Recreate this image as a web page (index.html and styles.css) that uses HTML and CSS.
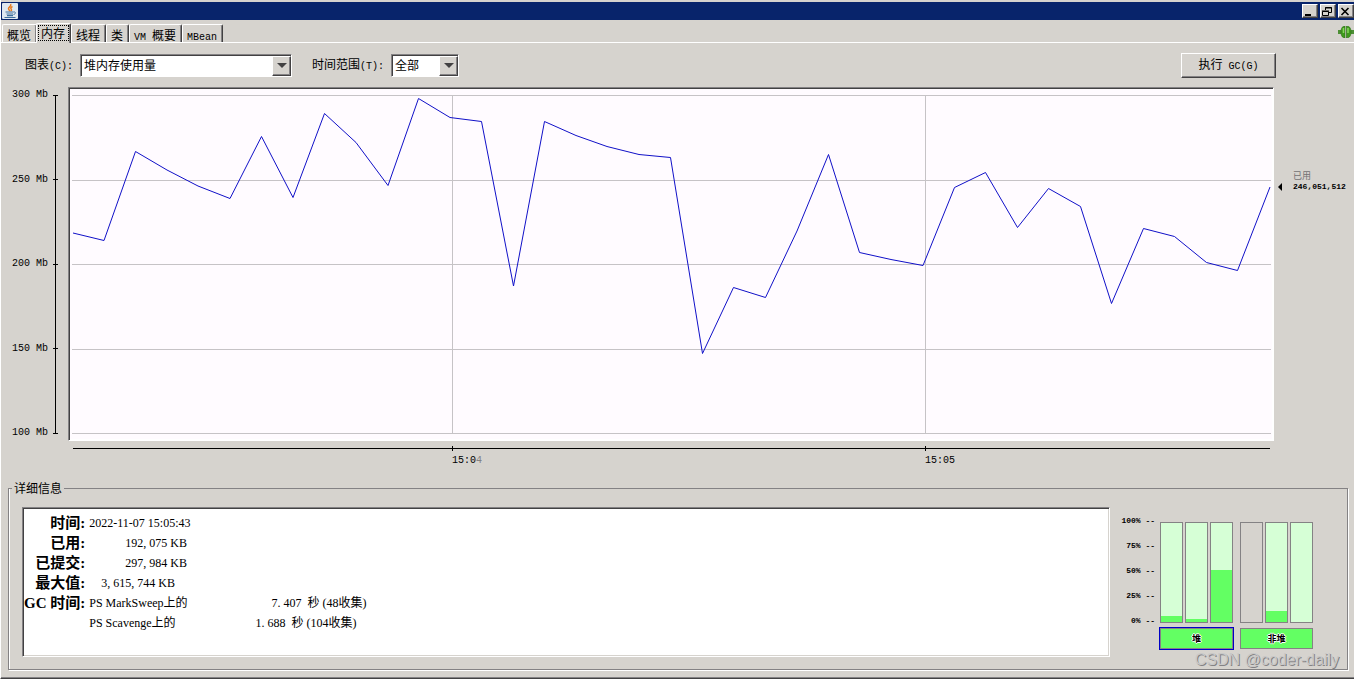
FILE: index.html
```html
<!DOCTYPE html>
<html lang="zh-CN">
<head>
<meta charset="utf-8">
<title>内存</title>
<link rel="stylesheet" href="styles.css">
</head>
<body>
<div class="window">
  <header class="titlebar">
    <svg class="java-icon" viewBox="0 0 16 16" aria-hidden="true">
      <rect width="16" height="16" rx="1" fill="#dfe8f0"/>
      <path d="M8.600 1C10 3 6.500 4 6.500 5.500S8 7 7.500 8.300M10.500 3.500C8.500 4.500 8.500 5.500 9.300 6.300S9 8 9 8.300" fill="none" stroke="#e87a1c" stroke-width="1.500"/>
      <path d="M3.500 9h8M4.500 11h6.500M5 12.700h6M2.500 14.500h11" fill="none" stroke="#3f6f9c" stroke-width="1.200"/>
      <path d="M11.500 9c2.500-.6 2.500 2 0 2.600" fill="none" stroke="#3f6f9c"/>
    </svg>
    <div class="window-buttons">
      <button class="win-btn" aria-label="最小化"><svg viewBox="0 0 12 11"><path d="M2 9h6" stroke="#000" stroke-width="2"/></svg></button>
      <button class="win-btn" aria-label="还原"><svg viewBox="0 0 12 11"><path d="M4.500 4V1.500h6v5H8M4 2h7M1.500 5.500h6v4h-6zM1 5h7" fill="none" stroke="#000"/></svg></button>
      <button class="win-btn" aria-label="关闭"><svg viewBox="0 0 12 11"><path d="M2.500 2l7 7M9.500 2l-7 7" stroke="#000" stroke-width="1.600"/></svg></button>
    </div>
  </header>

  <nav class="tabs" role="tablist">
    <button class="tab" role="tab">概览</button>
    <button class="tab selected" role="tab" aria-selected="true">内存</button>
    <button class="tab" role="tab">线程</button>
    <button class="tab" role="tab">类</button>
    <button class="tab" role="tab"><span class="mono">VM </span>概要</button>
    <button class="tab" role="tab"><span class="mono">MBean</span></button>
    <svg class="connected" viewBox="0 0 16 12" aria-label="已连接">
      <path d="M0 4h3v4H0zM13 4h3v4h-3z" fill="#4d8f35"/>
      <path d="M7 0v12C4 12 3 9 3 6s1-6 4-6z" fill="#3f9a1c" stroke="#27680f" stroke-width=".6"/>
      <path d="M8.500 0v12c3.500 0 4.500-3 4.500-6S12 0 8.500 0z" fill="#3f9a1c" stroke="#27680f" stroke-width=".6"/>
      <path d="M5.500 2v5M10 2v5" stroke="#86d85c" stroke-width="1.500"/>
    </svg>
  </nav>

  <main class="content">
    <div class="toolbar">
      <label for="chart">图表<span class="mono">(C):</span></label>
      <span class="combo combo-chart"><select id="chart"><option>堆内存使用量</option></select><span class="arrow"></span></span>
      <label class="range-label" for="range">时间范围<span class="mono">(T):</span></label>
      <span class="combo combo-range"><select id="range"><option>全部</option></select><span class="arrow"></span></span>
      <button class="gc-btn">执行<span class="mono"> GC(G)</span></button>
    </div>

    <section class="chart">
      <div class="y-axis mono">
        <span>300 Mb</span><span>250 Mb</span><span>200 Mb</span><span>150 Mb</span><span>100 Mb</span>
      </div>
      <div class="plot">
        <svg viewBox="69 88 1204 352" preserveAspectRatio="none" role="img" aria-label="堆内存使用量">
          <path class="grid-line" d="M72 95.500H1271M72 180.500H1271M72 264.500H1271M72 349.500H1271M72 433.500H1271M452.500 96V433M925.500 96V433"/>
          <polyline class="series" points="73,233 104,240.500 135.500,151.500 167,170 198,186 230,198.500 261.500,136.500 293,197.500 324.500,113.500 356,142.500 388,185.500 418.500,98.500 450,117.500 481.500,121.500 513.500,286 544.500,121.500 576,135.500 607,146.500 639,154.500 670.500,157.500 702.500,353.500 733.500,287.500 765.500,297.500 797,231 828.500,154.500 859.500,252.500 891,259.500 923,265.500 954.500,187.500 985.500,172.500 1017.500,227.500 1048.500,188.500 1080.500,206.500 1111.500,303.500 1143.500,228.500 1174.500,236.500 1206.500,262.500 1237.500,270.500 1270,187"/>
        </svg>
      </div>
      <div class="marker">
        <span class="pointer"></span>
        <p><span class="used">已用</span><b class="mono">246,051,512</b></p>
      </div>
      <div class="x-axis mono">
        <span class="tick tick-first">15:0<span class="faded">4</span></span><span class="tick tick-second">15:05</span>
      </div>
    </section>

    <fieldset class="details">
      <legend>详细信息</legend>
      <div class="info">
        <table>
          <tr><th scope="row">时间:</th><td>2022-11-07 15:05:43</td></tr>
          <tr><th scope="row">已用:</th><td class="indent-large">192, 075 KB</td></tr>
          <tr><th scope="row">已提交:</th><td class="indent-large">297, 984 KB</td></tr>
          <tr><th scope="row">最大值:</th><td class="indent-small">3, 615, 744 KB</td></tr>
          <tr><th scope="row">GC 时间:</th><td>PS MarkSweep上的<span class="gc-time">7. 407&nbsp; 秒 (48收集)</span></td></tr>
          <tr><th></th><td>PS Scavenge上的<span class="gc-time gc-time-minor">1. 688&nbsp; 秒 (104收集)</span></td></tr>
        </table>
      </div>
      <div class="pools">
        <div class="scale mono"><span>100% --</span><span>75% --</span><span>50% --</span><span>25% --</span><span>0% --</span></div>
        <div class="pool-group heap">
          <div class="bars">
            <div class="bar"><i style="height:6%"></i></div>
            <div class="bar"><i style="height:3%"></i></div>
            <div class="bar"><i style="height:53%"></i></div>
          </div>
          <button class="pool-btn active">堆</button>
        </div>
        <div class="pool-group">
          <div class="bars">
            <div class="bar empty"></div>
            <div class="bar"><i style="height:11%"></i></div>
            <div class="bar"></div>
          </div>
          <button class="pool-btn">非堆</button>
        </div>
      </div>
    </fieldset>
  </main>
  <div class="watermark">CSDN @coder-daily</div>
</div>
</body>
</html>
```
FILE: styles.css
```css
* { box-sizing: border-box; }

body {
  margin: 0;
  background: #d6d3ce;
  color: #000;
  font: 12px/16px "Liberation Serif", "Noto Sans CJK SC", serif;
}

button, select {
  font: inherit;
  color: inherit;
  border-radius: 0;
}

.mono {
  font-family: "Liberation Mono", monospace;
  font-size: 10px;
  white-space: pre;
}

.window {
  position: relative;
  display: flex;
  flex-direction: column;
  min-height: 100vh;
  padding-top: 2px;
  border-left: 1px solid #fff;
  border-bottom: 1px solid #424142;
  box-shadow: inset 0 -1px #848284;
}

.titlebar {
  display: flex;
  align-items: center;
  justify-content: space-between;
  height: 18px;
  padding-left: 1px;
  background: #08246b;
}

.java-icon { width: 16px; height: 16px; }

.window-buttons { display: flex; gap: 2px; }

.win-btn {
  width: 16px;
  height: 14px;
  padding: 0;
  border: 1px solid;
  border-color: #fff #424142 #424142 #fff;
  background: #d6d3ce;
  box-shadow: inset -1px -1px #848284;
}

.win-btn svg { display: block; width: 12px; height: 11px; }

.tabs {
  display: flex;
  align-items: flex-end;
  height: 23px;
  padding-left: 1px;
  border-bottom: 1px solid #fff;
}

.tab {
  height: 18px;
  padding: 0 5px 0 4px;
  border: 1px solid;
  border-color: #fff #424142 transparent #fff;
  border-bottom: 0;
  border-radius: 2px 2px 0 0;
  background: #d6d3ce;
  line-height: 22px;
  box-shadow: inset -1px 0 #848284;
}

.tab.selected {
  height: 20px;
  margin-left: -1px;
  margin-bottom: -1px;
  line-height: 20px;
  outline: 1px dotted #000;
  outline-offset: -3px;
}

.connected { width: 16px; height: 12px; margin: 0 0 4px auto; }

.content {
  display: flex;
  flex: 1;
  flex-direction: column;
  padding: 10px 6px 8px 7px;
}

.toolbar { display: flex; align-items: center; height: 24px; padding-left: 17px; }

.toolbar label { margin-right: 7px; line-height: 18px; padding-top: 2px; }
.toolbar .range-label { margin-left: 20px; margin-right: 7px; }

.combo {
  position: relative;
  height: 23px;
  border: 1px solid;
  border-color: #848284 #fff #fff #848284;
  box-shadow: inset 1px 1px #424142;
  background: #fff;
}

.combo-chart { width: 212px; }
.combo-range { width: 68px; }

.combo select {
  width: 100%;
  height: 21px;
  padding: 2px 20px 0 3px;
  border: 0;
  appearance: none;
  background: transparent;
}

.arrow {
  position: absolute;
  top: 1px;
  right: 0;
  display: grid;
  place-items: center;
  width: 19px;
  height: 20px;
  border: 1px solid;
  border-color: #fff #424142 #424142 #fff;
  box-shadow: inset -1px -1px #848284;
  background: #d6d3ce;
  pointer-events: none;
}

.arrow::before {
  content: "";
  border: 5px solid transparent;
  border-top-color: #424142;
  border-bottom: 0;
}

.gc-btn {
  width: 95px;
  height: 25px;
  margin-left: auto;
  margin-right: 72px;
  padding: 2px 0 0;
  border: 1px solid;
  border-color: #fff #424142 #424142 #fff;
  box-shadow: inset -1px -1px #848284;
  background: #d6d3ce;
}

.chart {
  display: grid;
  flex: 1;
  grid-template-columns: 60px 1fr 74px;
  grid-template-rows: 1fr auto;
  margin-top: 10px;
}

.y-axis {
  position: relative;
  display: flex;
  flex-direction: column;
  justify-content: space-between;
  padding: 2px 10px 2px 4px;
  line-height: 12px;
}

.y-axis span { display: flex; justify-content: space-between; align-items: center; }
.y-axis span::after { content: ""; width: 5px; height: 1px; background: #000; }

.y-axis::after {
  content: "";
  position: absolute;
  top: 8px;
  right: 12px;
  bottom: 8px;
  width: 1px;
  background: #000;
}

.plot {
  position: relative;
  min-height: 240px;
  border: 1px solid;
  border-color: #848284 #fff #fff #848284;
  box-shadow: inset 1px 1px #424142, inset -1px -1px #fff;
  background: #fffbff;
}

.plot svg { position: absolute; width: 100%; height: 100%; }
.grid-line { fill: none; stroke: #c6c3c6; vector-effect: non-scaling-stroke; shape-rendering: crispEdges; }
.series { fill: none; stroke: #1010c8; vector-effect: non-scaling-stroke; }

.marker { display: flex; padding: 84px 0 0 4px; }

.pointer {
  height: 8px;
  margin-top: 12px;
  border: 4px solid transparent;
  border-right-color: #000;
  border-left: 0;
}

.marker p { margin: 0 0 0 11px; font-size: 9px; line-height: 10px; }
.marker .used { display: block; color: #737173; }
.marker .mono { font-size: 8px; }

.x-axis {
  grid-column: 2;
  display: grid;
  grid-template-columns: 379fr 473fr 345fr;
  height: 32px;
  margin: 7px 4px 0 5px;
  background: linear-gradient(#000, #000) 0 0 / 100% 1px no-repeat;
  line-height: 12px;
}

.tick { position: relative; padding-top: 7px; }
.tick::before {
  content: "";
  position: absolute;
  top: -2px;
  left: 0;
  width: 1px;
  height: 5px;
  background: #000;
}
.tick-first { grid-column: 2; }
.tick-second { grid-column: 3; }
.faded { color: #848284; }

.details {
  display: flex;
  gap: 11px;
  min-width: 0;
  margin: 0;
  padding: 10px 34px 12px 13px;
  border: 1px solid #848284;
  box-shadow: 1px 1px #fff, inset 1px 0 #fff;
}

.details legend { padding: 1px 2px 0; margin-left: -10px; line-height: 16px; }

.info {
  flex: 1;
  height: 150px;
  padding: 5px 1px;
  border: 1px solid;
  border-color: #848284 #fff #fff #848284;
  box-shadow: inset 1px 1px #424142, inset -1px -1px #d6d3ce;
  background: #fff;
}

.info table { border-collapse: collapse; }
.info th, .info td { height: 20px; padding: 0; line-height: 20px; }
.info th { min-width: 60px; font-size: 15px; text-align: right; white-space: nowrap; }
.info td { padding-left: 4px; white-space: nowrap; }
.info .indent-large { padding-left: 40px; }
.info .indent-small { padding-left: 16px; }
.gc-time { margin-left: 84px; }
.gc-time-minor { margin-left: 80px; }

.pools { display: flex; padding-top: 8px; }

.scale {
  display: flex;
  flex-direction: column;
  justify-content: space-between;
  height: 112px;
  margin-right: 5px;
  font-size: 8px;
  font-weight: bold;
  line-height: 12px;
  text-align: right;
}

.pool-group { padding-top: 7px; }
.pool-group.heap { margin-right: 7px; }
.bars { display: flex; gap: 2px; height: 101px; }

.bar {
  display: flex;
  align-items: flex-end;
  width: 23px;
  border: 1px solid #848284;
  background: #d6ffd6;
}

.bar.empty { background: transparent; }
.bar i { width: 100%; background: #63ff63; }

.pool-btn {
  width: 100%;
  height: 21px;
  margin-top: 5px;
  padding: 0;
  border: 1px solid #848284;
  background: #63ff63;
  font-size: 9px;
  font-weight: bold;
  line-height: 18px;
  text-shadow: 1px 0 #fff, -1px 0 #fff, 0 1px #fff, 0 -1px #fff;
}

.pool-btn.active { outline: 1px solid #0000c6; }

.watermark {
  position: absolute;
  right: 15px;
  bottom: 8px;
  color: #c8c8c8;
  font: 16px/20px "Liberation Sans", sans-serif;
  text-shadow: 1px 1px #848284;
}
```
